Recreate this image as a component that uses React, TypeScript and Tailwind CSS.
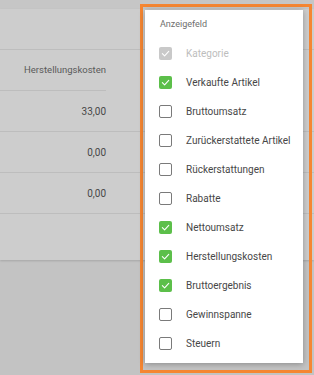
import React from "react";

const items: { label: string; state: "disabled" | "on" | "off" }[] = [
  { label: "Kategorie", state: "disabled" },
  { label: "Verkaufte Artikel", state: "on" },
  { label: "Bruttoumsatz", state: "off" },
  { label: "Zurückerstattete Artikel", state: "off" },
  { label: "Rückerstattungen", state: "off" },
  { label: "Rabatte", state: "off" },
  { label: "Nettoumsatz", state: "on" },
  { label: "Herstellungskosten", state: "on" },
  { label: "Bruttoergebnis", state: "on" },
  { label: "Gewinnspanne", state: "off" },
  { label: "Steuern", state: "off" },
];

function Check() {
  return (
    <svg width="9" height="9" viewBox="0 0 10 10" fill="none">
      <path d="M1.5 5.2 L4 7.6 L8.6 2.6" stroke="white" strokeWidth="1.2" strokeLinecap="round" strokeLinejoin="round" />
    </svg>
  );
}

function Box({ state }: { state: "disabled" | "on" | "off" }) {
  if (state === "off")
    return <div className="w-[13px] h-[13px] rounded-[2px] border border-[#7a7a7a] bg-white" />;
  return (
    <div
      className={
        state === "on"
          ? "w-[13px] h-[13px] rounded-[2px] bg-[#5cbf4a] flex items-center justify-center"
          : "w-[13px] h-[13px] rounded-[2px] bg-[#c9c9c9] flex items-center justify-center"
      }
    >
      <Check />
    </div>
  );
}

export default function App() {
  return (
    <div
      className="relative w-[314px] h-[375px] overflow-hidden bg-[#c3c3c3]"
      style={{ fontFamily: "Roboto, 'Noto Sans', sans-serif" }}
    >
      <div className="h-[9px] bg-[#c6c6c6]" />
      <div className="h-[251px] bg-[#cdcdcd] shadow-[0_1px_2px_rgba(0,0,0,0.15)] flex flex-col">
        <div className="h-[41px] border-b border-[#bdbdbd]" />
        <div className="h-[40px] border-b border-[#bdbdbd] w-[106px] flex items-center justify-end text-[9.5px] text-[#5a5a5a] box-content">
          Herstellungskosten
        </div>
        {["33,00", "0,00", "0,00"].map((v, i) => (
          <div key={i} className="h-[41px] border-b border-[#bdbdbd] flex items-center">
            <div className="w-[106px] text-right text-[10px] text-[#474747]">{v}</div>
          </div>
        ))}
        <div className="flex-1" />
      </div>

      <div className="absolute left-[140px] top-[4px] w-[172px] h-[369px] border-[3px] border-[#f58632]">
        <div className="ml-[2px] mt-[3px] w-[158px] h-[353px] bg-white shadow-[0_1px_6px_rgba(0,0,0,0.3)]">
          <div className="pl-[15px] pt-[8px] h-[29px] text-[9px] leading-[12px] text-[#6e6e6e]">Anzeigefeld</div>
          <div className="flex flex-col">
            {items.map((it) => (
              <div key={it.label} className="h-[29px] flex items-center pl-[14px]">
                <Box state={it.state} />
                <span
                  className={
                    it.state === "disabled"
                      ? "ml-[14px] text-[10px] text-[#bdbdbd]"
                      : "ml-[14px] text-[10px] text-[#474747]"
                  }
                >
                  {it.label}
                </span>
              </div>
            ))}
          </div>
        </div>
      </div>
    </div>
  );
}
